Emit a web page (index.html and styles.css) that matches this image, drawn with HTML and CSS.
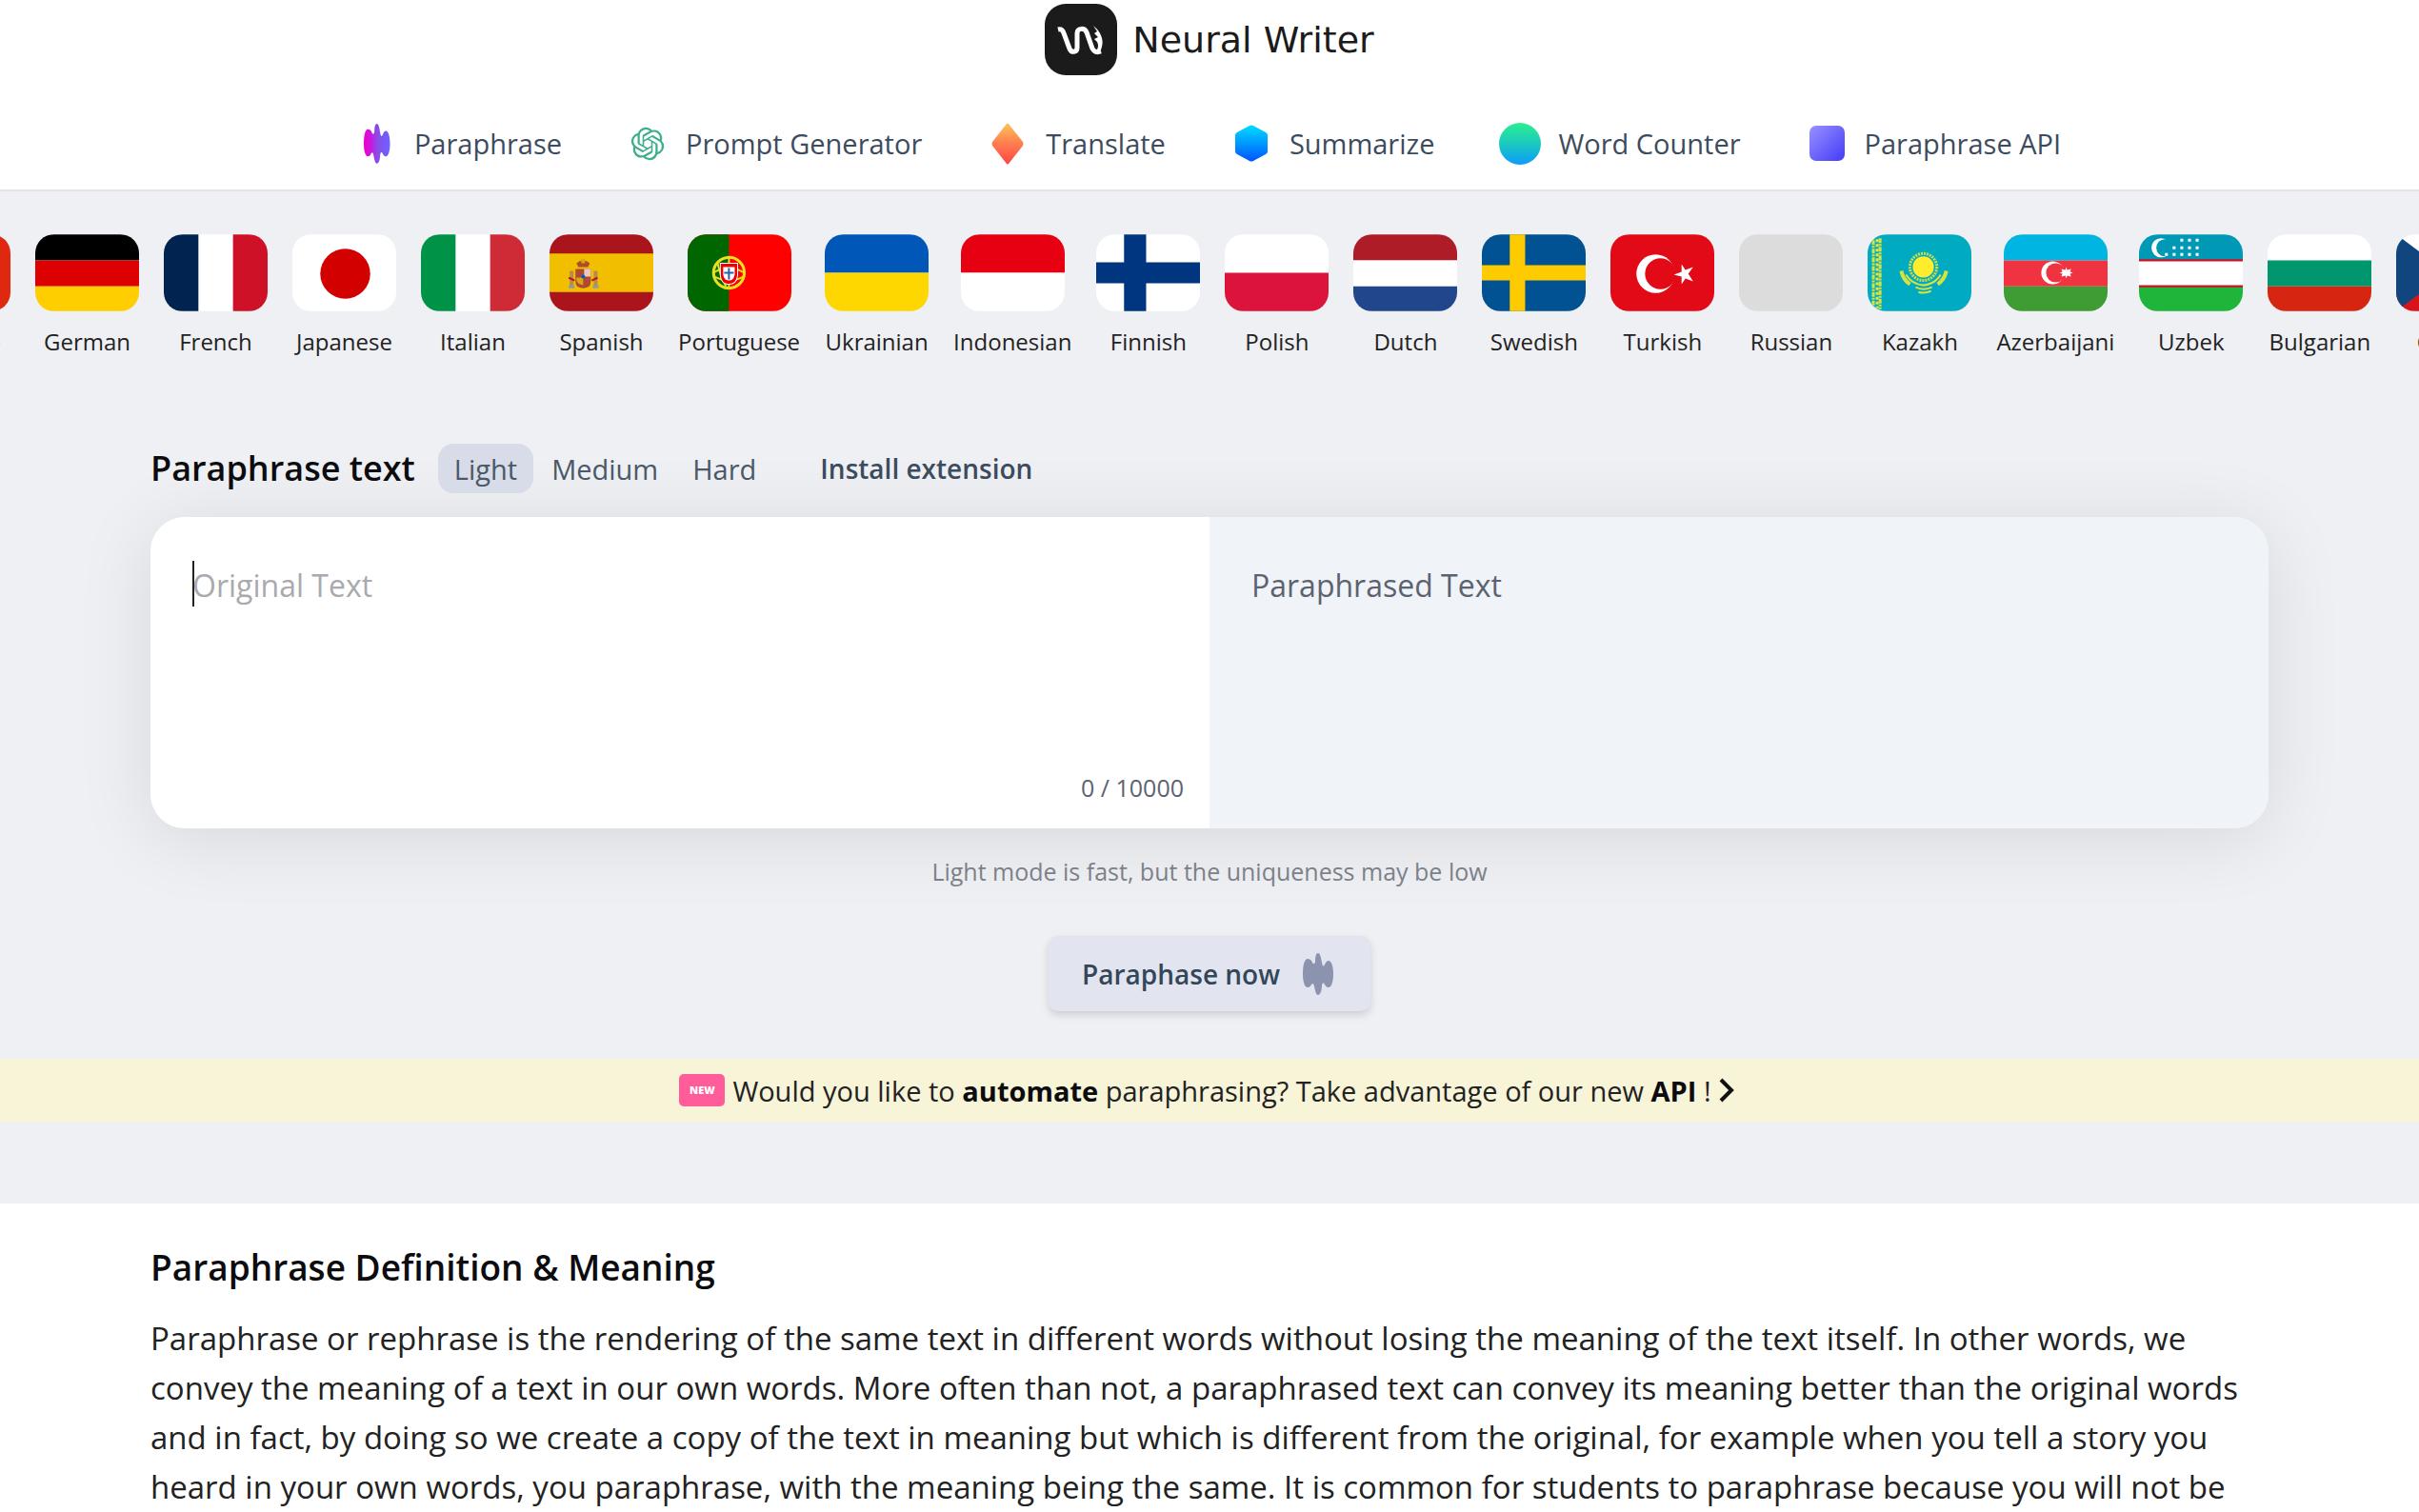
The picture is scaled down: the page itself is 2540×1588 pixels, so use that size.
FILE: index.html
```html
<!DOCTYPE html>
<html lang="en">
<head>
    <meta charset="UTF-8">
    <meta name="viewport" content="width=device-width, initial-scale=1.0">
    <title>Neural Writer - Paraphrase text</title>
    <link rel="stylesheet" href="styles.css">
</head>
<body>
    <header class="header">
        <a class="logo" href="#">
            <svg width="76" height="75" viewBox="0 0 76 75">
                <rect width="76" height="75" rx="22" fill="#1b1b1b"/>
                <path d="M14 27c4-1 5 1 6 4l6 16c2 5 8 4 8-1V31c0-6 8-6 10-1l6 17c2 4 6 4 9 3" fill="none" stroke="#fff" stroke-width="5"/>
                <path d="M51 23c8 6 11 15 9 22-1 5-4 8-8 7 4-4 5-8 3-12l-3-3 4-2-4-4 3-2z" fill="#fff"/>
            </svg>
            <span>Neural Writer</span>
        </a>
        <nav class="nav">
            <a href="#">
                <svg class="nav-icon" viewBox="0 0 46 46">
                    <defs>
                        <linearGradient id="wave" x1="0" x2="1" y1="0" y2="0">
                            <stop offset="0" stop-color="#f000c8"/>
                            <stop offset=".3" stop-color="#c81be0"/>
                            <stop offset=".5" stop-color="#8a4be8"/>
                            <stop offset="1" stop-color="#6f62ff"/>
                        </linearGradient>
                    </defs>
                    <path fill="url(#wave)" transform="translate(10 2) scale(.86 .95)" d="M0 22C0 12 2 6 5 6c2 0 4 1 5 4q2 3 3-1c0-6 1-9 3-9s3 4 4 10q1 6 3 2c1-2 2-4 4-4 3 0 5 6 5 14s-2 14-5 14c-2 0-3-1-4-3q-2-4-3 1c0 6-2 10-4 10s-3-4-4-9q-1-5-3-2c-1 2-2 3-4 3-3 0-5-6-5-14z"/>
                </svg>
                Paraphrase
            </a>
            <a href="#">
                <svg class="nav-icon" viewBox="-4 -4 32 32">
                    <path fill="#3eae8d" d="M22.2819 9.8211a5.9847 5.9847 0 0 0-.5157-4.9108 6.0462 6.0462 0 0 0-6.5098-2.9A6.0651 6.0651 0 0 0 4.9807 4.1818a5.9847 5.9847 0 0 0-3.9977 2.9 6.0462 6.0462 0 0 0 .7427 7.0966 5.98 5.98 0 0 0 .511 4.9107 6.051 6.051 0 0 0 6.5146 2.9001A5.9847 5.9847 0 0 0 13.2599 24a6.0557 6.0557 0 0 0 5.7718-4.2058 5.9894 5.9894 0 0 0 3.9977-2.9001 6.0557 6.0557 0 0 0-.7475-7.0729zm-9.022 12.6081a4.4755 4.4755 0 0 1-2.8764-1.0408l.1419-.0804 4.7783-2.7582a.7948.7948 0 0 0 .3927-.6813v-6.7369l2.02 1.1686a.071.071 0 0 1 .038.052v5.5826a4.504 4.504 0 0 1-4.4945 4.4944zm-9.6607-4.1254a4.4708 4.4708 0 0 1-.5346-3.0137l.142.0852 4.783 2.7582a.7712.7712 0 0 0 .7806 0l5.8428-3.3685v2.3324a.0804.0804 0 0 1-.0332.0615L9.74 19.9502a4.4992 4.4992 0 0 1-6.1408-1.6464zM2.3408 7.8956a4.485 4.485 0 0 1 2.3655-1.9728V11.6a.7664.7664 0 0 0 .3879.6765l5.8144 3.3543-2.0201 1.1685a.0757.0757 0 0 1-.071 0l-4.8303-2.7865A4.504 4.504 0 0 1 2.3408 7.872zm16.5963 3.8558L13.1038 8.364 15.1192 7.2a.0757.0757 0 0 1 .071 0l4.8303 2.7913a4.4944 4.4944 0 0 1-.6765 8.1042v-5.6772a.79.79 0 0 0-.407-.667zm2.0107-3.0231l-.142-.0852-4.7735-2.7818a.7759.7759 0 0 0-.7854 0L9.409 9.2297V6.8974a.0662.0662 0 0 1 .0284-.0615l4.8303-2.7866a4.4992 4.4992 0 0 1 6.6802 4.66zM8.3065 12.863l-2.02-1.1638a.0804.0804 0 0 1-.038-.0567V6.0742a4.4992 4.4992 0 0 1 7.3757-3.4537l-.142.0805L8.704 5.459a.7948.7948 0 0 0-.3927.6813zm1.0976-2.3654l2.602-1.4998 2.6069 1.4998v2.9994l-2.5974 1.4997-2.6067-1.4997Z"/>
                </svg>
                Prompt Generator
            </a>
            <a href="#">
                <svg class="nav-icon" viewBox="0 0 46 46">
                    <defs>
                        <linearGradient id="diamond" x1="0" x2="0" y1="0" y2="1">
                            <stop offset="0" stop-color="#fbc45a"/>
                            <stop offset=".45" stop-color="#ff8350"/>
                            <stop offset="1" stop-color="#fd4545"/>
                        </linearGradient>
                    </defs>
                    <path fill="url(#diamond)" d="M22 2q1-1 2 0l15 19q1 2 0 4L24 44q-1 1-2 0L7 25q-1-2 0-4z"/>
                </svg>
                Translate
            </a>
            <a href="#">
                <svg class="nav-icon" viewBox="0 0 46 46">
                    <defs>
                        <linearGradient id="hexagon" x1="0" x2="0" y1="0" y2="1">
                            <stop offset="0" stop-color="#00dcff"/>
                            <stop offset="1" stop-color="#0055ff"/>
                        </linearGradient>
                    </defs>
                    <path fill="url(#hexagon)" d="M21 4q2-1 4 0l13 7q2 1 2 3v17q0 2-2 3l-13 7q-2 1-4 0L8 34q-2-1-2-3V14q0-2 2-3z"/>
                </svg>
                Summarize
            </a>
            <a href="#">
                <svg class="nav-icon" viewBox="0 0 46 46">
                    <defs>
                        <linearGradient id="circle" x1="0" x2="0" y1="0" y2="1">
                            <stop offset="0" stop-color="#2bee90"/>
                            <stop offset=".5" stop-color="#1cc9be"/>
                            <stop offset="1" stop-color="#0c9bfb"/>
                        </linearGradient>
                    </defs>
                    <circle cx="23" cy="23" r="22" fill="url(#circle)"/>
                </svg>
                Word Counter
            </a>
            <a href="#">
                <svg class="nav-icon" viewBox="0 0 46 46">
                    <defs>
                        <linearGradient id="square" x1="0" x2="1" y1="0" y2="1">
                            <stop offset="0" stop-color="#9a90ff"/>
                            <stop offset="1" stop-color="#423cf8"/>
                        </linearGradient>
                    </defs>
                    <rect x="5" y="4" width="37" height="37" rx="7" fill="url(#square)"/>
                </svg>
                Paraphrase API
            </a>
        </nav>
    </header>

    <main class="main">
        <div class="languages">
            <a class="language" href="#">
                <svg class="flag" viewBox="0 0 108 80"><path fill="#de2910" d="M0 0h108v80H0z"/></svg>
                Chinese
            </a>
            <a class="language" href="#">
                <svg class="flag" viewBox="0 0 108 80"><path d="M0 0h108v27H0z"/><path fill="#d00" d="M0 27h108v27H0z"/><path fill="#ffce00" d="M0 54h108v26H0z"/></svg>
                German
            </a>
            <a class="language" href="#">
                <svg class="flag" viewBox="0 0 108 80"><path fill="#fff" d="M0 0h108v80H0z"/><path fill="#00234f" d="M0 0h36v80H0z"/><path fill="#ce1126" d="M72 0h36v80H72z"/></svg>
                French
            </a>
            <a class="language" href="#">
                <svg class="flag" viewBox="0 0 108 80"><path fill="#fff" d="M0 0h108v80H0z"/><circle cx="55" cy="41" r="26" fill="#d30000"/></svg>
                Japanese
            </a>
            <a class="language" href="#">
                <svg class="flag" viewBox="0 0 108 80"><path fill="#fff" d="M0 0h108v80H0z"/><path fill="#009246" d="M0 0h36v80H0z"/><path fill="#ce2b37" d="M72 0h36v80H72z"/></svg>
                Italian
            </a>
            <a class="language" href="#">
                <svg class="flag" viewBox="0 0 108 80">
                    <path fill="#aa151b" d="M0 0h108v80H0z"/>
                    <path fill="#f1bf00" d="M0 20h108v40H0z"/>
                    <path fill="#b98a4a" d="M21 38h4v17h-4zM46 38h4v17h-4z"/>
                    <path fill="#8f9aa8" d="M20 53h6v3h-6zM45 53h6v3h-6z"/>
                    <path fill="#ad4a30" d="M27 36h16v13q0 7-8 7t-8-7zM28 30q7-6 14 0l-2 4H30z"/>
                    <path fill="#e9c8c0" d="M36 36h7v8h-7z"/>
                    <path fill="#d9a514" d="M28 45h7v8q-6-1-7-5zM33 26h4v4h-4z"/>
                    <circle cx="35" cy="44" r="2" fill="#005bbf"/>
                    <path fill="none" stroke="#ad1519" stroke-width="2" d="M20 45l6 3M50 45l-6 3"/>
                </svg>
                Spanish
            </a>
            <a class="language" href="#">
                <svg class="flag" viewBox="0 0 108 80">
                    <path fill="red" d="M0 0h108v80H0z"/>
                    <path fill="#060" d="M0 0h43v80H0z"/>
                    <circle cx="43" cy="40" r="16" fill="none" stroke="#e8e020" stroke-width="3"/>
                    <path fill="none" stroke="#e8e020" stroke-width="2" d="M27 40q16-10 32 0M28 44q15 8 30 0M43 23v34M31 29q3 15 9 25"/>
                    <path fill="#e00" stroke="#fff" d="M34 30h18v13q-1 9-9 9t-9-9z"/>
                    <path fill="#fff" d="M37 34h12v8q-1 6-6 6t-6-6z"/>
                    <path fill="none" stroke="#2a5fb0" stroke-width="2" d="M43 35v12M38 40h10"/>
                </svg>
                Portuguese
            </a>
            <a class="language" href="#">
                <svg class="flag" viewBox="0 0 108 80"><path fill="#0057b8" d="M0 0h108v40H0z"/><path fill="#ffd700" d="M0 40h108v40H0z"/></svg>
                Ukrainian
            </a>
            <a class="language" href="#">
                <svg class="flag" viewBox="0 0 108 80"><path fill="#e70011" d="M0 0h108v40H0z"/><path fill="#fff" d="M0 40h108v40H0z"/></svg>
                Indonesian
            </a>
            <a class="language" href="#">
                <svg class="flag" viewBox="0 0 108 80"><path fill="#fff" d="M0 0h108v80H0z"/><path fill="#003580" d="M0 29h108v22H0zM29 0h23v80H29z"/></svg>
                Finnish
            </a>
            <a class="language" href="#">
                <svg class="flag" viewBox="0 0 108 80"><path fill="#fff" d="M0 0h108v40H0z"/><path fill="#dc143c" d="M0 40h108v40H0z"/></svg>
                Polish
            </a>
            <a class="language" href="#">
                <svg class="flag" viewBox="0 0 108 80"><path fill="#ae1c28" d="M0 0h108v27H0z"/><path fill="#fff" d="M0 27h108v27H0z"/><path fill="#21468b" d="M0 54h108v26H0z"/></svg>
                Dutch
            </a>
            <a class="language" href="#">
                <svg class="flag" viewBox="0 0 108 80"><path fill="#005293" d="M0 0h108v80H0z"/><path fill="#fecb00" d="M0 32h108v16H0zM29 0h16v80H29z"/></svg>
                Swedish
            </a>
            <a class="language" href="#">
                <svg class="flag" viewBox="0 0 108 80">
                    <path fill="#e30a17" d="M0 0h108v80H0z"/>
                    <circle cx="47" cy="41" r="20" fill="#fff"/>
                    <circle cx="52" cy="41" r="16" fill="#e30a17"/>
                    <path fill="#fff" d="M66 42l8-3 0-8 4 6 8-3-5 7 5 8-8-3-4 6 0-8z"/>
                </svg>
                Turkish
            </a>
            <a class="language" href="#">
                <svg class="flag" viewBox="0 0 108 80"><path fill="#dcdcdc" d="M0 0h108v80H0z"/></svg>
                Russian
            </a>
            <a class="language" href="#">
                <svg class="flag" viewBox="0 0 108 80">
                    <path fill="#00abc2" d="M0 0h108v80H0z"/>
                    <path fill="none" stroke="#d6e23e" stroke-width="3" stroke-dasharray="5 1 2 1" d="M6 6v70M13 4v74"/>
                    <path fill="none" stroke="#e8e63a" stroke-width="3" stroke-dasharray="3 2" d="M10 5v72"/>
                    <circle cx="58" cy="34" r="11" fill="#ffec2d"/>
                    <circle cx="58" cy="34" r="14" fill="none" stroke="#c9dc48" stroke-width="3" stroke-dasharray="2 1"/>
                    <path fill="none" stroke="#d6e23e" stroke-width="4" d="M35 38q2 9 9 14M82 38q-2 9-9 14"/>
                    <path fill="none" stroke="#d6e23e" stroke-width="2" d="M40 42q6 10 18 11 12-1 18-11M50 55q8 4 17 0M53 60q6 2 13-1"/>
                </svg>
                Kazakh
            </a>
            <a class="language" href="#">
                <svg class="flag" viewBox="0 0 108 80">
                    <path fill="#00b5e2" d="M0 0h108v27H0z"/>
                    <path fill="#ef3340" d="M0 27h108v27H0z"/>
                    <path fill="#3f9c35" d="M0 54h108v26H0z"/>
                    <circle cx="51" cy="40" r="12" fill="#fff"/>
                    <circle cx="54" cy="40" r="10" fill="#ef3340"/>
                    <path fill="#fff" d="M65 34l1 3 4-1-1 3 3 1-3 1 1 3-4-1-1 3-1-3-4 1 1-3-3-1 3-1-1-3 4 1z"/>
                </svg>
                Azerbaijani
            </a>
            <a class="language" href="#">
                <svg class="flag" viewBox="0 0 108 80">
                    <path fill="#0099b5" d="M0 0h108v27H0z"/>
                    <path fill="#fff" d="M0 27h108v27H0z"/>
                    <path fill="#1eb53a" d="M0 54h108v26H0z"/>
                    <path stroke="#ce1126" stroke-width="2" d="M0 27h108M0 54h108"/>
                    <circle cx="23" cy="14" r="10" fill="#fff"/>
                    <circle cx="27" cy="14" r="9" fill="#0099b5"/>
                    <path stroke="#fff" stroke-width="3" stroke-dasharray="3 5" d="M43 6h20M35 14h28M27 21h36"/>
                </svg>
                Uzbek
            </a>
            <a class="language" href="#">
                <svg class="flag" viewBox="0 0 108 80"><path fill="#fff" d="M0 0h108v27H0z"/><path fill="#00966e" d="M0 27h108v27H0z"/><path fill="#d62612" d="M0 54h108v26H0z"/></svg>
                Bulgarian
            </a>
            <a class="language" href="#">
                <svg class="flag" viewBox="0 0 108 80"><path fill="#fff" d="M0 0h108v40H0z"/><path fill="#d7141a" d="M0 40h108v40H0z"/><path fill="#11457e" d="M0 0l54 40L0 80z"/></svg>
                Czech
            </a>
        </div>

        <form class="editor">
            <div class="toolbar">
                <h1>Paraphrase text</h1>
                <div class="modes">
                    <button type="button" class="mode active">Light</button>
                    <button type="button" class="mode">Medium</button>
                    <button type="button" class="mode">Hard</button>
                </div>
                <a class="install" href="#">Install extension</a>
            </div>
            <div class="card">
                <div class="pane">
                    <span class="caret"></span>
                    <textarea placeholder="Original Text" aria-label="Original Text"></textarea>
                    <span class="counter">0 / 10000</span>
                </div>
                <div class="pane result">
                    <textarea placeholder="Paraphrased Text" aria-label="Paraphrased Text" readonly></textarea>
                </div>
            </div>
            <p class="hint">Light mode is fast, but the uniqueness may be low</p>
            <button type="button" class="submit">
                Paraphase now
                <svg width="32" height="44" viewBox="0 0 32 44">
                    <path fill="#8b93af" d="M0 22C0 12 2 6 5 6c2 0 4 1 5 4q2 3 3-1c0-6 1-9 3-9s3 4 4 10q1 6 3 2c1-2 2-4 4-4 3 0 5 6 5 14s-2 14-5 14c-2 0-3-1-4-3q-2-4-3 1c0 6-2 10-4 10s-3-4-4-9q-1-5-3-2c-1 2-2 3-4 3-3 0-5-6-5-14z"/>
                </svg>
            </button>
        </form>

        <a class="promo" href="#">
            <span class="badge">NEW</span>
            <span>Would you like to <b>automate</b> paraphrasing? Take advantage of our new <b>API</b> !</span>
            <svg width="16" height="26" viewBox="0 0 16 26">
                <path d="M2 2l11 11L2 24" fill="none" stroke="#111" stroke-width="4"/>
            </svg>
        </a>
    </main>

    <article class="article">
        <h2>Paraphrase Definition &amp; Meaning</h2>
        <p>Paraphrase or rephrase is the rendering of the same text in different words without losing the meaning of the text itself. In other words, we convey the meaning of a text in our own words. More often than not, a paraphrased text can convey its meaning better than the original words and in fact, by doing so we create a copy of the text in meaning but which is different from the original, for example when you tell a story you heard in your own words, you paraphrase, with the meaning being the same. It is common for students to paraphrase because you will not be</p>
    </article>
</body>
</html>
```
FILE: styles.css
```css
* {
    box-sizing: border-box;
}

body {
    margin: 0;
    background: #fff;
    color: #222;
    font-family: "Open Sans", "Noto Sans", sans-serif;
}

a {
    color: inherit;
    text-decoration: none;
}

button {
    border: 0;
    background: none;
    font-family: inherit;
    cursor: pointer;
}

/* header */

.header {
    height: 201px;
    padding-top: 4px;
    border-bottom: 2px solid #e4e4e6;
}

.logo {
    display: flex;
    justify-content: center;
    align-items: center;
    gap: 16px;
    color: #1b1b1b;
    font-family: "DejaVu Sans", sans-serif;
    font-size: 38px;
}

.nav {
    display: flex;
    justify-content: center;
    gap: 67px;
    margin-top: 49px;
    padding-right: 4px;
    color: #3c4b5d;
    font-size: 29px;
    font-weight: 500;
    line-height: 46px;
}

.nav a {
    display: flex;
    align-items: center;
    gap: 17px;
}

.nav-icon {
    width: 46px;
    height: 46px;
}

/* languages */

.main {
    background: #eff0f4;
    padding-bottom: 86px;
}

.languages {
    display: flex;
    gap: 26px;
    padding: 45px 0 90px;
    margin-left: -98px;
    overflow: hidden;
}

.language {
    display: flex;
    flex: none;
    flex-direction: column;
    align-items: center;
    gap: 15px;
    min-width: 109px;
    font-size: 24px;
    line-height: 34px;
}

.flag {
    width: 109px;
    height: 81px;
    border-radius: 20px;
}

/* editor */

.editor {
    max-width: 2224px;
    margin: 0 auto;
    text-align: center;
}

.toolbar {
    display: flex;
    align-items: center;
    color: #4b5868;
}

h1,
h2 {
    margin: 0;
    color: #0c0c0f;
    font-size: 36px;
    font-weight: 600;
    line-height: 50px;
}

.modes {
    display: flex;
    gap: 2px;
    margin: 0 50px 0 24px;
}

.mode {
    height: 52px;
    padding: 0 17px;
    border-radius: 16px;
    color: inherit;
    font-size: 29px;
}

.mode.active {
    background: #d8dce8;
}

.install {
    color: #3c4b5d;
    font-size: 28px;
    font-weight: 600;
}

.card {
    display: flex;
    margin-top: 25px;
    border-radius: 36px;
    overflow: hidden;
    box-shadow: 0 10px 80px rgba(0, 0, 0, 0.1);
}

.pane {
    position: relative;
    display: flex;
    flex: 1;
    flex-direction: column;
    height: 327px;
    padding: 46px 27px 26px 44px;
    background: #fff;
}

.result {
    background: #f0f3f8;
}

.pane textarea {
    flex: 1;
    padding: 0;
    border: 0;
    outline: 0;
    background: none;
    resize: none;
    font-family: inherit;
    font-size: 32px;
    line-height: 52px;
}

.pane textarea::placeholder {
    color: #a9a9ae;
}

.result textarea::placeholder {
    color: #5b6370;
}

.caret {
    position: absolute;
    top: 46px;
    left: 44px;
    width: 2px;
    height: 48px;
    background: #222;
}

.counter {
    align-self: flex-end;
    color: #5b6370;
    font-size: 25px;
    font-weight: 500;
    line-height: 34px;
}

.hint {
    margin: 28px 0 51px;
    color: #7c8189;
    font-size: 25px;
    line-height: 34px;
}

.submit {
    display: inline-flex;
    align-items: center;
    gap: 24px;
    height: 79px;
    padding: 0 39px 0 35px;
    border-radius: 10px;
    background: #e2e5ef;
    box-shadow: 0 4px 8px rgba(0, 0, 0, 0.14);
    color: #34465a;
    font-size: 28px;
    font-weight: 600;
}

/* promo */

.promo {
    display: flex;
    justify-content: center;
    align-items: center;
    gap: 8px;
    height: 66px;
    margin-top: 50px;
    padding-right: 6px;
    background: #f7f4d8;
    font-size: 29px;
}

.promo b {
    color: #0c0c0f;
}

.badge {
    width: 48px;
    border-radius: 5px;
    background: #ff5c9a;
    color: #fff;
    font-size: 11px;
    font-weight: 800;
    line-height: 34px;
    text-align: center;
}

/* article */

.article {
    max-width: 2224px;
    margin: 0 auto;
    padding-top: 42px;
}

.article h2 {
    font-size: 37px;
}

.article p {
    margin: 24px 0 0;
    font-size: 33px;
    line-height: 52px;
}
```
